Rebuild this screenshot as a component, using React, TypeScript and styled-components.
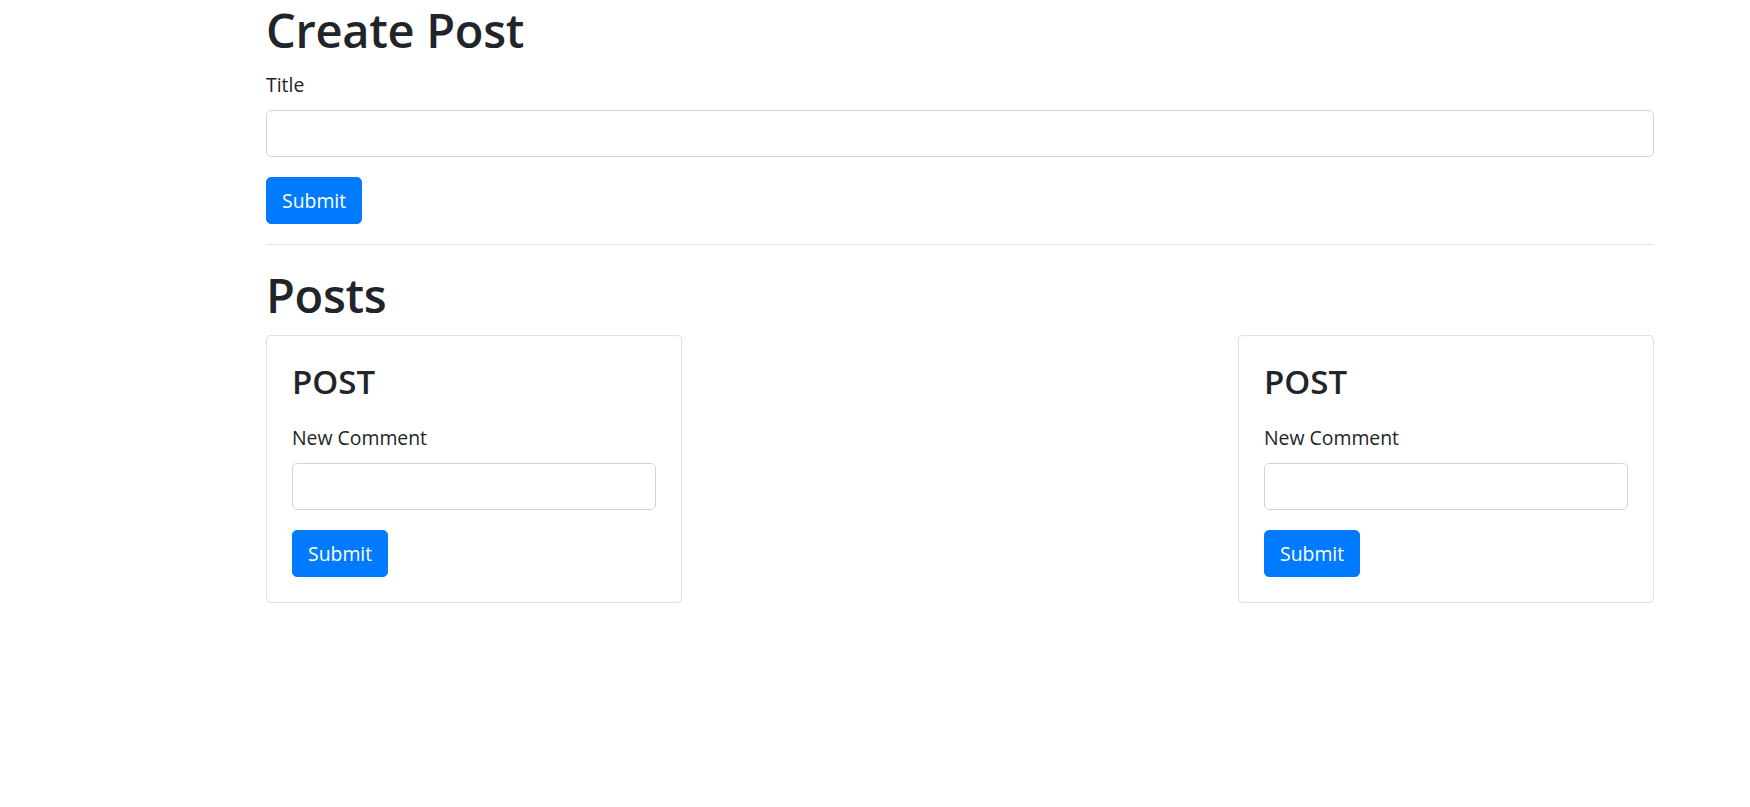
import React from "react";
import styled, { createGlobalStyle } from "styled-components";

const Global = createGlobalStyle`
  html, body { margin: 0; padding: 0; background: #fff; }
  body {
    font-family: "Open Sans", "Noto Sans", sans-serif;
    font-size: 19.4px;
    line-height: 30px;
    color: #212529;
  }
  * { box-sizing: border-box; }
`;

const Container = styled.div`
  width: 1388px;
  margin-left: 266px;
`;

const Heading = styled.h1`
  font-size: 47px;
  font-weight: 600;
  line-height: 60px;
  letter-spacing: -0.3px;
  margin: 0 0 10px;
`;

const CardTitle = styled.h3`
  font-size: 33px;
  font-weight: 600;
  line-height: 42px;
  margin: 0 0 20px;
`;

const FormGroup = styled.div`
  margin-bottom: 20px;
`;

const Label = styled.label`
  display: inline-block;
  margin-bottom: 10px;
`;

const Input = styled.input`
  display: block;
  width: 100%;
  height: 47px;
  padding: 7.5px 15px;
  font: inherit;
  color: #495057;
  background: #fff;
  border: 1px solid #ced4da;
  border-radius: 5px;
  outline: none;
`;

const Button = styled.button`
  display: inline-block;
  height: 47px;
  font: inherit;
  color: #fff;
  background: #007bff;
  border: 1px solid #007bff;
  border-radius: 5px;
  padding: 7px 15px;
  line-height: 30px;
  cursor: pointer;
`;

const Rule = styled.hr`
  margin: 20px 0;
  border: 0;
  border-top: 1px solid rgba(0, 0, 0, 0.1);
`;

const Row = styled.div`
  display: flex;
  justify-content: space-between;
`;

const Card = styled.div`
  width: 416px;
  border: 1px solid rgba(0, 0, 0, 0.125);
  border-radius: 5px;
  background: #fff;
`;

const CardBody = styled.div`
  padding: 25px;
`;

function PostCard() {
  return (
    <Card>
      <CardBody>
        <CardTitle>POST</CardTitle>
        <FormGroup>
          <Label>New Comment</Label>
          <Input />
        </FormGroup>
        <Button>Submit</Button>
      </CardBody>
    </Card>
  );
}

export default function App() {
  return (
    <>
      <Global />
      <Container>
        <Heading>Create Post</Heading>
        <form onSubmit={(e) => e.preventDefault()}>
          <FormGroup>
            <Label>Title</Label>
            <Input />
          </FormGroup>
          <Button>Submit</Button>
        </form>
        <Rule />
        <Heading>Posts</Heading>
        <Row>
          <PostCard />
          <PostCard />
        </Row>
      </Container>
    </>
  );
}
